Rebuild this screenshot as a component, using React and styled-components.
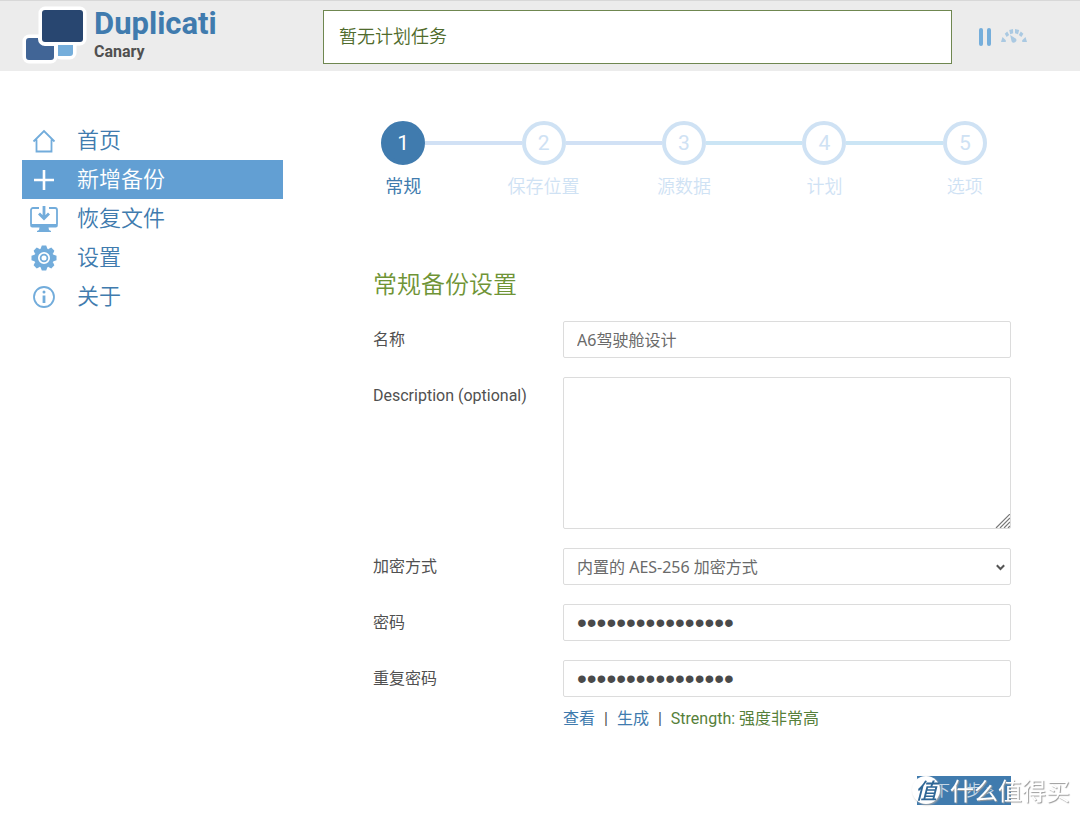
import React, { useState } from "react";
import styled, { createGlobalStyle, css } from "styled-components";

const fonts = `Roboto, "Noto Sans CJK SC", sans-serif`;

const GlobalStyle = createGlobalStyle`
  *, *::before, *::after { box-sizing: border-box; }
  body {
    margin: 0;
    background: #fff;
    color: #505050;
    font: 16px/24px ${fonts};
  }
`;

const Header = styled.header`
  display: flex;
  align-items: center;
  height: 71px;
  padding-top: 2px;
  background: #ececec;
  border-top: 1px solid #d8d8d8;
`;

const Brand = styled.a`
  display: flex;
  flex: none;
  width: 323px;
  padding-left: 22px;
  gap: 8px;
  text-decoration: none;
  svg { overflow: visible; }
`;

const BrandName = styled.strong`
  display: block;
  color: #407bae;
  font-size: 31px;
  line-height: 33px;
`;

const Channel = styled.span`
  display: block;
  color: #505050;
  font-size: 16px;
  font-weight: 700;
  line-height: 24px;
`;

const Status = styled.div`
  flex: 1;
  height: 54px;
  padding: 0 15px;
  border: 1px solid #6f8750;
  background: #fff;
  color: #4f6b2c;
  font-size: 18px;
  font-weight: 350;
  line-height: 52px;
`;

const Actions = styled.div`
  display: flex;
  flex: none;
  width: 128px;
  padding-left: 26px;
  gap: 9px;
`;

const IconButton = styled.button`
  display: flex;
  align-items: center;
  padding: 0;
  border: 0;
  background: none;
  color: #75aedb;
  cursor: pointer;
`;

const Body = styled.div`
  display: flex;
  align-items: flex-start;
  padding: 50px 45px 12px 22px;
`;

const Sidebar = styled.nav`
  flex: none;
  width: 261px;
`;

const NavLink = styled.a`
  display: flex;
  align-items: center;
  height: 39px;
  padding-left: 7px;
  gap: 18px;
  color: #407bae;
  font-size: 22px;
  font-weight: 350;
  text-decoration: none;
  svg { color: #72acdb; }
  ${(p) => p.$active && css`
    background: #629fd3;
    color: #fff;
    svg { color: #fff; }
  `}
`;

const Main = styled.main`
  flex: 1;
  min-width: 0;
  margin-left: 50px;
`;

const Steps = styled.ol`
  display: flex;
  margin: 0;
  padding: 0;
  list-style: none;
`;

const Step = styled.li`
  flex: 1;
  color: ${(p) => (p.$active ? "#407bae" : "#cfe2f4")};
  font-size: 18px;
  font-weight: ${(p) => (p.$active ? 400 : 350)};
  text-align: center;
`;

const Track = styled.div`
  display: flex;
  align-items: center;
  margin-bottom: 10px;
`;

const Line = styled.span`
  flex: 1;
  height: 4px;
  background: ${(p) => p.$color || "transparent"};
`;

const Circle = styled.span`
  width: 44px;
  height: 44px;
  border: 4px solid ${(p) => (p.$active ? "#407bae" : "#cfe2f4")};
  border-radius: 50%;
  background: ${(p) => (p.$active ? "#407bae" : "#fff")};
  color: ${(p) => (p.$active ? "#fff" : "#cfe2f4")};
  font-size: 21px;
  font-weight: 400;
  line-height: 36px;
`;

const Form = styled.form`
  padding: 68px 24px 0 40px;
`;

const Heading = styled.h1`
  margin: 0 0 18px;
  color: #6f9436;
  font-size: 24px;
  font-weight: 350;
  line-height: 36px;
`;

const Row = styled.div`
  display: flex;
  align-items: flex-start;
  margin-bottom: 19px;
`;

const Label = styled.label`
  flex: none;
  width: 190px;
  line-height: 37px;
`;

const Control = styled.div`
  position: relative;
  flex: 1;
  min-width: 0;
`;

const field = css`
  display: block;
  width: 100%;
  height: 37px;
  margin: 0;
  padding: 0 13px 2px;
  border: 1px solid #dcdcdc;
  border-radius: 2px;
  outline: 0;
  background: #fff;
  color: #6a6a6a;
  font: 400 16px/24px "Noto Sans", "Noto Sans CJK SC", sans-serif;
`;

const Input = styled.input`
  ${field}
  &[type="password"] {
    padding-bottom: 0;
    color: #4a4a4a;
    font: 28px/32px "Liberation Sans", sans-serif;
  }
`;

const Select = styled.select`
  ${field}
  padding-bottom: 0;
  appearance: none;
`;

const TextArea = styled.textarea`
  ${field}
  height: 152px;
  padding: 8px 13px;
  resize: vertical;
  &::-webkit-resizer { display: none; }
`;

const Corner = styled.svg`
  position: absolute;
  right: ${(p) => p.$right}px;
  bottom: ${(p) => p.$bottom}px;
  pointer-events: none;
`;

const Links = styled.div`
  display: flex;
  gap: 9px;
  margin: -9px 0 0 190px;
  a { color: #407bae; text-decoration: none; }
  output { color: #56803a; }
`;

const Footer = styled.div`
  display: flex;
  justify-content: flex-end;
  margin-top: 45px;
`;

const NextButton = styled.button`
  width: 94px;
  height: 29px;
  padding: 0;
  border: 0;
  background: #407bae;
  color: #c5d7e6;
  font: 350 16px/29px ${fonts};
`;

const Watermark = styled.div`
  position: fixed;
  right: 10px;
  bottom: 12px;
  display: flex;
  align-items: center;
  gap: 10px;
  color: #fff;
  font: 400 24px/32px "Noto Sans CJK SC", sans-serif;
  text-shadow: 1px 1px 1px #999;
  pointer-events: none;
`;

const Badge = styled.span`
  width: 28px;
  height: 28px;
  border-radius: 50%;
  background: #fff;
  box-shadow: 1px 1px 2px #aaa;
  color: #2f6796;
  font-size: 22px;
  font-style: italic;
  font-weight: 500;
  line-height: 26px;
  text-align: center;
  text-shadow: none;
`;

const Logo = () => (
  <svg width="64" height="60" viewBox="0 3 64 60" aria-hidden="true">
    <g fill="#fff" stroke="#fff" strokeWidth="7" strokeLinejoin="round">
      <rect x="20" y="6" width="41" height="32" rx="3" />
      <rect x="4" y="34" width="28" height="22" rx="3" />
      <rect x="36" y="38" width="15" height="14" rx="3" />
    </g>
    <path d="M36 41h15v8a3 3 0 0 1-3 3H36z" fill="#75aedb" />
    <path d="M7 34h9v1a7 7 0 0 0 7 7h9v11a3 3 0 0 1-3 3H7a3 3 0 0 1-3-3V37a3 3 0 0 1 3-3z" fill="#416596" />
    <rect x="20" y="6" width="41" height="32" rx="3" fill="#284670" />
  </svg>
);

const PauseIcon = () => (
  <svg width="14" height="18" viewBox="0 0 14 18" fill="currentColor" aria-hidden="true">
    <rect x="1" width="4" height="18" rx="2" />
    <rect x="9" width="4" height="18" rx="2" />
  </svg>
);

const GaugeIcon = () => (
  <svg width="26" height="18" viewBox="0 0 26 18" fill="currentColor" opacity=".55" aria-hidden="true">
    <path d="M1.500 9 4.800 12.200V14H0z M3.800 5.800 6.200 3.500 8.200 7 5.600 9z M8.200 2 12 1l.2 4.300-3 1z M14 1l4.200 1-1.200 4.300-3-1z M19.800 3.500l2.600 2.300L20.400 9l-2.600-2z M24.500 9 26 14h-4.800v-1.800z" />
    <path d="M9.200 7l5.800 3.800a2.500 2.500 0 1 1-4.400 2.600z" />
  </svg>
);

const NavIcon = ({ children }) => (
  <svg width="30" height="30" viewBox="0 0 30 30" fill="none" stroke="currentColor" strokeWidth="2" aria-hidden="true">
    {children}
  </svg>
);

const gearTeeth = [0, 45, 90, 135, 180, 225, 270, 315];

const navItems = [
  { text: "首页", icon: <path d="M4.500 15.500 15 5l10.500 10.500M7.500 13.500V25.500h15V13.500" strokeWidth="1.800" /> },
  { text: "新增备份", active: true, icon: <path d="M15 5v20M5 15h20" strokeWidth="2.600" /> },
  {
    text: "恢复文件",
    icon: (
      <>
        <path d="M10 4H4a2 2 0 0 0-2 2v14M20 4h6a2 2 0 0 1 2 2v14" strokeWidth="1.800" />
        <path d="M1.200 20h27.600v1.500a2 2 0 0 1-2 2h-7.300l.5 2.500 2 1v1H8v-1l2-1 .5-2.500H3.200a2 2 0 0 1-2-2z" fill="currentColor" stroke="none" />
        <path d="M15 2v12M10 9.500l5 5 5-5" strokeWidth="2.800" />
      </>
    ),
  },
  {
    text: "设置",
    icon: (
      <>
        {gearTeeth.map((a) => (
          <path key={a} d="M11.500 6 12.800 2.500h4.400L18.500 6z" transform={`rotate(${a} 15 15)`} fill="currentColor" stroke="none" />
        ))}
        <circle cx="15" cy="15" r="7.900" strokeWidth="3.800" />
        <circle cx="15" cy="15" r="3.400" strokeWidth="1.800" />
      </>
    ),
  },
  {
    text: "关于",
    icon: (
      <>
        <circle cx="15" cy="15" r="10" strokeWidth="1.800" />
        <path d="M15 13.500v7.500" strokeWidth="2.800" />
        <circle cx="15" cy="10" r="1.500" fill="currentColor" stroke="none" />
      </>
    ),
  },
];

const steps = ["常规", "保存位置", "源数据", "计划", "选项"];
const lineColors = ["#d1e1f5", "#d1e1f5", "#cbe5f5", "#cbe5f5"];

export default function App() {
  const [name, setName] = useState("A6驾驶舱设计");
  const [password, setPassword] = useState("abcdefgh12345678");
  const [repeat, setRepeat] = useState("abcdefgh12345678");

  return (
    <>
      <GlobalStyle />
      <Header>
        <Brand href="#">
          <Logo />
          <span>
            <BrandName>Duplicati</BrandName>
            <Channel>Canary</Channel>
          </span>
        </Brand>
        <Status>暂无计划任务</Status>
        <Actions>
          <IconButton type="button" aria-label="暂停"><PauseIcon /></IconButton>
          <IconButton type="button" aria-label="限速"><GaugeIcon /></IconButton>
        </Actions>
      </Header>
      <Body>
        <Sidebar>
          {navItems.map((item) => (
            <NavLink key={item.text} href="#" $active={item.active}>
              <NavIcon>{item.icon}</NavIcon>
              {item.text}
            </NavLink>
          ))}
        </Sidebar>
        <Main>
          <Steps>
            {steps.map((text, i) => (
              <Step key={text} $active={i === 0}>
                <Track>
                  <Line $color={lineColors[i - 1]} />
                  <Circle $active={i === 0}>{i + 1}</Circle>
                  <Line $color={lineColors[i]} />
                </Track>
                {text}
              </Step>
            ))}
          </Steps>
          <Form onSubmit={(e) => e.preventDefault()}>
            <Heading>常规备份设置</Heading>
            <Row>
              <Label htmlFor="name">名称</Label>
              <Control><Input id="name" value={name} onChange={(e) => setName(e.target.value)} /></Control>
            </Row>
            <Row>
              <Label htmlFor="description">Description (optional)</Label>
              <Control>
                <TextArea id="description" />
                <Corner $right={1} $bottom={1} width="15" height="14" viewBox="0 0 15 14" stroke="#777" strokeWidth="1.200" aria-hidden="true">
                  <path d="M1 14 15 0M5 14 15 4M9 14l6-6M13 14l2-2" />
                </Corner>
              </Control>
            </Row>
            <Row>
              <Label htmlFor="encryption">加密方式</Label>
              <Control>
                <Select id="encryption"><option>内置的 AES-256 加密方式</option></Select>
                <Corner $right={6} $bottom={14} width="9" height="7" viewBox="0 0 9 7" fill="none" stroke="#555" strokeWidth="2" aria-hidden="true">
                  <path d="M.8 1.200 4.500 5l3.700-3.800" />
                </Corner>
              </Control>
            </Row>
            <Row>
              <Label htmlFor="password">密码</Label>
              <Control><Input id="password" type="password" value={password} onChange={(e) => setPassword(e.target.value)} /></Control>
            </Row>
            <Row>
              <Label htmlFor="repeat">重复密码</Label>
              <Control><Input id="repeat" type="password" value={repeat} onChange={(e) => setRepeat(e.target.value)} /></Control>
            </Row>
            <Links>
              <a href="#">查看</a>
              <span>|</span>
              <a href="#">生成</a>
              <span>|</span>
              <output>Strength: 强度非常高</output>
            </Links>
            <Footer>
              <NextButton type="submit">下一步 &gt;</NextButton>
            </Footer>
          </Form>
        </Main>
      </Body>
      <Watermark>
        <Badge>值</Badge>
        什么值得买
      </Watermark>
    </>
  );
}
